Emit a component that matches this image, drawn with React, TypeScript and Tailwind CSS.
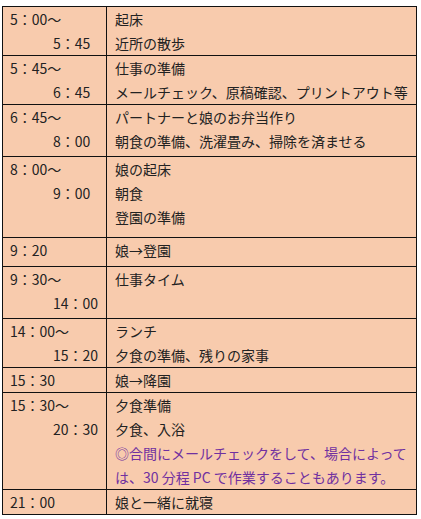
type Row = {
  from: string
  to?: string
  items: { text: string; note?: boolean }[]
  h: string
}

// 1日のスケジュール表
const rows: Row[] = [
  { from: '5：00〜', to: '5：45', items: [{ text: '起床' }, { text: '近所の散歩' }], h: 'h-[48px]' },
  {
    from: '5：45〜',
    to: '6：45',
    items: [{ text: '仕事の準備' }, { text: 'メールチェック、原稿確認、プリントアウト等' }],
    h: 'h-[48px]',
  },
  {
    from: '6：45〜',
    to: '8：00',
    items: [{ text: 'パートナーと娘のお弁当作り' }, { text: '朝食の準備、洗濯畳み、掃除を済ませる' }],
    h: 'h-[51px]',
  },
  {
    from: '8：00〜',
    to: '9：00',
    items: [{ text: '娘の起床' }, { text: '朝食' }, { text: '登園の準備' }],
    h: 'h-[80px]',
  },
  { from: '9：20', items: [{ text: '娘→登園' }], h: 'h-[28px]' },
  { from: '9：30〜', to: '14：00', items: [{ text: '仕事タイム' }], h: 'h-[51px]' },
  {
    from: '14：00〜',
    to: '15：20',
    items: [{ text: 'ランチ' }, { text: '夕食の準備、残りの家事' }],
    h: 'h-[48px]',
  },
  { from: '15：30', items: [{ text: '娘→降園' }], h: 'h-[24px]' },
  {
    from: '15：30〜',
    to: '20：30',
    items: [
      { text: '夕食準備' },
      { text: '夕食、入浴' },
      { text: '◎合間にメールチェックをして、場合によって', note: true },
      { text: 'は、30 分程 PC で作業することもあります。', note: true },
    ],
    h: 'h-[96px]',
  },
  { from: '21：00', items: [{ text: '娘と一緒に就寝' }], h: 'h-[24px]' },
]

export default function App() {
  return (
    <div
      className="min-h-screen bg-white pt-[6px] pl-[2px] text-[14px] leading-[24px] text-[#222]"
      style={{ fontFamily: '"Noto Sans CJK JP", "Noto Sans", sans-serif' }}
    >
      <div className="w-[415px] border border-[#111] bg-[#F8CBAD]">
        {rows.map((r, i) => (
          <div key={i} className={`flex ${i > 0 ? 'border-t border-[#111]' : ''}`}>
            <div className={`w-[104px] shrink-0 border-r border-[#111] pl-[7px] ${r.h}`}>
              <div className="whitespace-nowrap">{r.from}</div>
              {r.to && <div className="whitespace-nowrap pl-[43px]">{r.to}</div>}
            </div>
            <div className={`flex-1 pl-[8px] ${r.h}`}>
              {r.items.map((it, j) => (
                <div key={j} className={`whitespace-nowrap ${it.note ? 'text-[#7030A0]' : ''}`}>
                  {it.text}
                </div>
              ))}
            </div>
          </div>
        ))}
      </div>
    </div>
  )
}
